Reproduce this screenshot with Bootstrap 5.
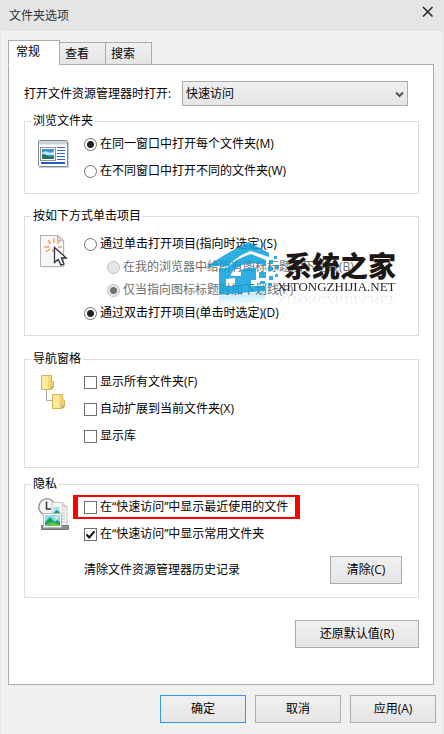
<!DOCTYPE html>
<html lang="zh-CN">
<head>
<meta charset="utf-8">
<meta name="viewport" content="width=device-width, initial-scale=1">
<title>文件夹选项</title>
<link href="https://cdn.jsdelivr.net/npm/bootstrap@5.3.0/dist/css/bootstrap.min.css" rel="stylesheet">
<style>
body{font:12px/18px "Open Sans","Noto Sans CJK SC",sans-serif;color:#000;background:#f0f0f0}
.dialog{min-height:100vh;border:1px solid #e5e5e5;border-top:0}
.titlebar{background:#e5e5e5;height:31px;padding:0 8px;color:#333}
.title-close{width:14px;height:14px;margin-bottom:8px;line-height:0}
.content-area{padding:9px 9px 0 7px}
.tabs{margin-bottom:-1px;position:relative}
.tabs .nav-link{border:1px solid #acacac;border-radius:0;color:#000;background:linear-gradient(#f0f0f0,#e5e5e5);padding:2px 5px;width:47px;height:23px;text-align:left;margin:0 0 0 -1px}
.tabs .nav-link.active{background:#fff;border-bottom-color:#fff;width:52px;height:25px;margin:0;padding:1px 7px 3px;color:#000}
.panel{background:#fff;border:1px solid #acacac;padding:16px 14px 36px 15px}
.open-row{padding-right:11px;margin-bottom:6px}
.open-select{width:226px;height:25px;border:1px solid #acacac;border-radius:0;background:linear-gradient(#f0f0f0,#e5e5e5);color:#000;appearance:none;padding:0 3px;font:inherit}
.select-wrap svg{position:absolute;right:4px;top:10px;pointer-events:none}
.group{border:1px solid #dcdcdc;padding:5px 16px 13px 13px}
.group legend{float:none;width:auto;margin:0 0 0 -7px;padding:0 2px;font:inherit}
.gap-group{margin-bottom:14px}
.gap-small{margin-bottom:7px}
.gap-first{margin-bottom:13px}
.group.click{padding-top:10px}
.group.nav-pane{padding-bottom:22px}
.options{gap:9px}
.options.tight{gap:5px}
.glyph{width:46px;flex:none}
.opt{gap:3px;margin:0;width:max-content}
.opt input{appearance:none;width:13px;height:13px;margin:0;border:1px solid #707070;background:#fff;flex:none}
.opt input[type=radio]{border-radius:50%}
.opt input[type=radio]:checked{background:radial-gradient(circle,#222 0 3px,#fff 4px)}
.opt input:disabled{border-color:#bcbcbc;background:#e6e6e6}
.opt input[type=radio]:disabled:checked{background:radial-gradient(circle,#707070 0 3px,#e6e6e6 4px)}
.opt input[type=checkbox]:checked{background:#fff url("data:image/svg+xml,%3Csvg xmlns='http://www.w3.org/2000/svg' viewBox='0 0 11 11'%3E%3Cpath d='M1.500 5.500l2.700 3L9.500 2.300' fill='none' stroke='%23111' stroke-width='2'/%3E%3C/svg%3E")}
.sub{margin-left:23px;color:#6d6d6d}
.win-btn{border:1px solid #acacac;border-radius:0;background:linear-gradient(#f0f0f0,#e5e5e5);color:#000;font:inherit;height:28px;padding:0}
.win-btn.default{border-color:#3399ff}
.w-clear{width:72px}.w-restore{width:124px}.w-foot{width:86px}
.highlight{border:solid #f00;border-width:2px 5px;margin:-3px 0 -3px -11px;padding:1px 7px 1px 6px}
.clear-row{margin-top:4px}
.restore-row{padding-top:22px}
.brand{position:absolute;left:180px;top:33px;width:200px;pointer-events:none}
.brand-words{position:absolute;left:73px;top:11px;white-space:nowrap}
.brand-name{font:900 28px/28px "Noto Sans CJK SC",sans-serif;color:#1c1614;padding-left:7px}
.brand-site{font:13px/15px "Liberation Serif",serif;color:#2a2422;-webkit-box-reflect:below -1px linear-gradient(transparent,rgba(0,0,0,.15))}
.brand svg{display:block}
.footer-row{padding:10px 7px 11px;gap:9px}
</style>
<script src="https://cdn.jsdelivr.net/npm/bootstrap@5.3.0/dist/js/bootstrap.bundle.min.js"></script>
</head>
<body>
<main class="dialog d-flex flex-column">
<header class="titlebar d-flex align-items-center justify-content-between"><span>文件夹选项</span>
<button class="title-close border-0 bg-transparent p-0" aria-label="关闭"><svg width="14" height="14" viewBox="0 0 14 14"><path d="M2 2l9.500 9.500M11.500 2L2 11.500" stroke="#222" stroke-width="1.500"/></svg></button></header>
<div class="content-area">
<div class="tabs nav align-items-end" role="tablist">
<button class="nav-link active" role="tab" aria-selected="true">常规</button><button class="nav-link" role="tab">查看</button><button class="nav-link" role="tab">搜索</button></div>
<section class="panel">
<div class="open-row d-flex align-items-center justify-content-between">
<label for="openTo">打开文件资源管理器时打开:</label>
<div class="select-wrap position-relative d-flex"><select id="openTo" class="open-select"><option>快速访问</option></select><svg width="9" height="7" viewBox="0 0 9 7"><path d="M1 1.500l3.500 3.500L8 1.500" fill="none" stroke="#555" stroke-width="2"/></svg></div>
</div>

<fieldset class="group gap-first">
<legend>浏览文件夹</legend>
<div class="d-flex">
<div class="glyph pt-1"><svg width="32" height="32" viewBox="0 0 32 32"><rect x="1" y="3" width="30" height="26" rx="1" fill="#ccc"/><rect x=".5" y="1.500" width="29" height="26" rx="1" fill="#fff" stroke="#7e8992"/><path d="M1 2h28v3.500H1z" fill="#ccd3da"/><rect x="2.500" y="8.500" width="15" height="13" fill="#fff" stroke="#8b949b"/><path d="M4 10h12v10H4z" fill="#3b94cf"/><path d="M4 14q3-3 6-1t6-1v4H4z" fill="#c4e8f8"/><path d="M4 15q4 0 6 2t6 0v3H4z" fill="#28705a"/><path d="M19 8.500h8M19 11.500h8M19 14.500h8M19 17.500h8M19 20.500h8" stroke="#3764c4"/><path d="M3 24h24" stroke="#2858c0" stroke-width="2"/></svg></div>
<div class="options d-flex flex-column">
<label class="opt d-flex align-items-center"><input type="radio" name="browse" checked>在同一窗口中打开每个文件夹(M)</label>
<label class="opt d-flex align-items-center"><input type="radio" name="browse">在不同窗口中打开不同的文件夹(W)</label>
</div></div>
</fieldset>

<div class="position-relative gap-group">
<fieldset class="group click">
<legend>按如下方式单击项目</legend>
<div class="d-flex">
<div class="glyph"><svg width="32" height="36" viewBox="0 0 32 36"><path d="M3.500.500h17l6 6v26h-23z" fill="#c8c8c8" opacity=".5"/><path d="M2.500-.5h17l6 6v26h-23z" fill="#f7f7f7" stroke="#b4b4b4"/><path d="M2.500.500h17" stroke="#b4b4b4"/><path d="M19.500 0v6h6z" fill="#e2e2e2" stroke="#b4b4b4"/><g stroke="#f6a26d" stroke-width="1.500"><path d="M16 8V3M12.500 9L10 5M19.500 9l2-4M11 12H6M12 14l-4 3M20 12h4M15 14v3"/></g><path d="M16.500 12.500v15l3.700-3.300 2.800 6 3-1.300-2.700-5.900h5z" fill="#fff" stroke="#2e3445" stroke-width="1.300"/></svg></div>
<div class="options tight d-flex flex-column">
<label class="opt d-flex align-items-center"><input type="radio" name="click">通过单击打开项目(指向时选定)(S)</label>
<label class="opt sub d-flex align-items-center"><input type="radio" name="underline" disabled>在我的浏览器中给所有图标标题加下划线(B)</label>
<label class="opt sub d-flex align-items-center"><input type="radio" name="underline" checked disabled>仅当指向图标标题时加下划线(P)</label>
<label class="opt d-flex align-items-center"><input type="radio" name="click" checked>通过双击打开项目(单击时选定)(D)</label>
</div></div>
</fieldset>
<div class="brand">
<svg width="76" height="70" viewBox="0 0 76 70"><defs><linearGradient id="fade" x2="0" y2="1"><stop stop-color="#14a3dc" stop-opacity=".25"/><stop offset="1" stop-color="#14a3dc" stop-opacity="0"/></linearGradient></defs>
<g fill="#0ca0dc" opacity=".85"><path d="M1 28Q18 15 45 2L65 13V17L47 11Q34 15 24 26Q14 25 1 28Z"/><path fill-rule="evenodd" d="M15 28H23Q33 18 47 14L62 20V26Q50 21 41 24Q31 27 27 34V36H37V30Q43 27 52 28V40H47V46H61V51L15 55ZM22 39V46H31V38Z"/><path d="M55 32h7v6h-7zM65 20h4v4h-4zM70 16h3v3h-3zM64 27h5v4h-5zM71 25h4v4h-4zM65 36h4v4h-4zM71 34h3v3h-3zM64 43h4v3h-4zM56 41h5v3h-5z"/></g><path d="M15 56l46-4v8l-46 8z" fill="url(#fade)"/></svg>
<div class="brand-words"><div class="brand-name">系统之家</div><div class="brand-site">XITONGZHIJIA.NET</div></div>
</div>
</div>

<fieldset class="group nav-pane gap-small">
<legend>导航窗格</legend>
<div class="d-flex">
<div class="glyph"><svg width="30" height="40" viewBox="0 0 30 40"><path d="M8.500 15v12.500H14" fill="none" stroke="#a8a8a8"/><g id="folder"><path d="M3.500 2.500h10v5l2 1v6l-2 2h-10z" fill="#f5d978" stroke="#dbb449"/><path d="M4 3h6v13H4z" fill="#fbe99c"/><path d="M13 8v7l-2 1" fill="none" stroke="#e2b94f"/><path d="M14 13v3" stroke="#5b9bcf"/></g><use href="#folder" x="11" y="19"/></svg></div>
<div class="options d-flex flex-column">
<label class="opt d-flex align-items-center"><input type="checkbox">显示所有文件夹(F)</label>
<label class="opt d-flex align-items-center"><input type="checkbox">自动扩展到当前文件夹(X)</label>
<label class="opt d-flex align-items-center"><input type="checkbox">显示库</label>
</div></div>
</fieldset>

<fieldset class="group">
<legend>隐私</legend>
<div class="d-flex">
<div class="glyph"><svg width="32" height="36" viewBox="0 0 32 36"><circle cx="9" cy="9" r="8.200" fill="#f7f7f7" stroke="#9b9b9b" stroke-width="1.500"/><path d="M8.500 3.500V11H13" fill="none" stroke="#333" stroke-width="1.500"/><path d="M14 4.500h11l4 4V28H14z" fill="#f5f5f5" stroke="#c5c5c5"/><path d="M24.500 4.500v4.500H29" fill="#ddd" stroke="#c5c5c5"/><path d="M15.500 9h6v6h-6z" fill="#a7dff4"/><path d="M15.500 15l3-3 3 2v1z" fill="#169d68"/><path d="M24 12h3M24 15h3M24 18h3M24 21h3M24 24h3" stroke="#bbb"/><path d="M3.500 27.500h27v4h-27z" fill="#8b9291" stroke="#717776"/><path d="M5.500 15.500h18v14h-18z" fill="#fff" stroke="#b0bdbe"/><path d="M7 17h15v11H7z" fill="#8edaf0"/><path d="M7 24l5-5 5 5 2-2 3 2v4H7z" fill="#16a56b"/><path d="M7 27l7-3 8 3v1H7z" fill="#65c644"/><circle cx="18.500" cy="19.500" r="1.500" fill="#fff06c"/></svg></div>
<div class="options d-flex flex-column flex-grow-1">
<label class="opt highlight d-flex align-items-center"><input type="checkbox">在“快速访问”中显示最近使用的文件</label>
<label class="opt d-flex align-items-center"><input type="checkbox" checked>在“快速访问”中显示常用文件夹</label>
<div class="clear-row d-flex align-items-center justify-content-between"><span>清除文件资源管理器历史记录</span><button class="win-btn btn w-clear">清除(C)</button></div>
</div></div>
</fieldset>
<div class="restore-row d-flex justify-content-end"><button class="win-btn btn w-restore">还原默认值(R)</button></div>
</section>
</div>
<footer class="footer-row d-flex justify-content-end"><button class="win-btn btn default w-foot">确定</button><button class="win-btn btn w-foot">取消</button><button class="win-btn btn w-foot">应用(A)</button></footer>
</main>
</body>
</html>
